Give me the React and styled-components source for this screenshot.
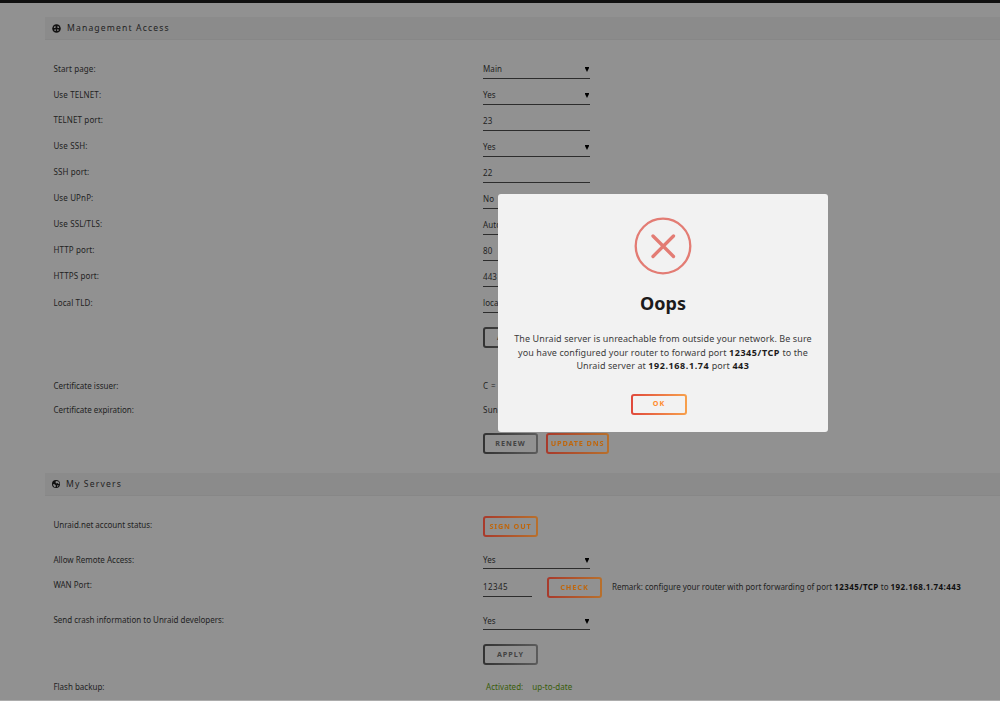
import styled, { createGlobalStyle } from 'styled-components'

const GlobalStyle = createGlobalStyle`
  * {
    box-sizing: border-box;
  }

  body {
    margin: 0;
    background: #f2f2f2;
    color: #3a3a3a;
    font-family: 'Noto Sans', sans-serif;
    font-size: 8px;
    line-height: 12px;
    overflow: hidden;
  }
`

const Page = styled.main`
  height: 701px;
  overflow: hidden;
  border-top: 3px solid #1c1b1b;
  border-bottom: 1px solid #acacac;
`

const Section = styled.section`
  padding: ${({ $gap }) => $gap}px 0 0 45px;
`

const SectionTitle = styled.h2`
  display: flex;
  align-items: center;
  gap: 6px;
  height: 23px;
  margin: 0;
  padding-left: 7px;
  background: #e8e8e8;
  border-bottom: 1px solid #e2e2e2;
  font-size: 8.6px;
  font-weight: normal;
  letter-spacing: 1.15px;
`

const Rows = styled.div`
  padding: ${({ $top }) => $top}px 0 0 8.4px;
`

const Row = styled.div`
  display: grid;
  grid-template-columns: 429.6px 1fr;
  height: ${({ $height = 26 }) => $height}px;
`

const Label = styled.div`
  padding-top: ${({ $top = 6 }) => $top}px;
  letter-spacing: ${({ $spacing = 0 }) => $spacing}px;
`

const Value = styled.div`
  display: flex;
  align-items: flex-start;
  white-space: pre;
`

const Field = styled.div`
  display: flex;
  align-items: center;
  justify-content: space-between;
  width: ${({ $width = 107 }) => $width}px;
  height: ${({ $height = 23 }) => $height}px;
  padding-top: ${({ $top = 3 }) => $top}px;
  border-bottom: 1px solid #4a4a4a;
  letter-spacing: ${({ $spacing = 0.1 }) => $spacing}px;
`

const Arrow = styled.svg`
  width: 4px;
  height: 5px;
  margin: 1px 1px 0 0;
`

const Plain = styled.div`
  padding-top: ${({ $top = 6 }) => $top}px;
  padding-left: ${({ $left = 0 }) => $left}px;
  letter-spacing: ${({ $spacing = 0 }) => $spacing}px;

  b {
    color: #1c1b1b;
    letter-spacing: 0.42px;
  }
`

const Status = styled(Plain)`
  display: flex;
  gap: 9px;
  color: #5f9c10;
`

const Button = styled.button`
  width: ${({ $width = 55 }) => $width}px;
  height: 21px;
  margin: 0 8px 0 0;
  padding: 0 0 2px;
  border: 2px solid transparent;
  border-radius: 3px;
  background:
    linear-gradient(#f2f2f2, #f2f2f2) padding-box,
    linear-gradient(90deg, #e0493c, #f7a04c) border-box;
  color: #ff8c2f;
  font-family: inherit;
  font-size: 7.2px;
  font-weight: bold;
  letter-spacing: ${({ $spacing = 1 }) => $spacing}px;
  line-height: 12px;
`

const DarkButton = styled(Button)`
  background:
    linear-gradient(#f2f2f2, #f2f2f2) padding-box,
    linear-gradient(90deg, #555, #999) border-box;
  color: #707070;
`

const AccentButton = styled(Button)`
  position: relative;
  z-index: 1;
  background:
    linear-gradient(#919191, #919191) padding-box,
    linear-gradient(90deg, #a83a2c, #b8702c) border-box;
  color: #bf660c;
`

const Overlay = styled.div`
  position: fixed;
  inset: 0 0 1px;
  background: rgba(0, 0, 0, 0.4);
`

const Modal = styled.div`
  position: fixed;
  top: 194px;
  left: 498px;
  z-index: 2;
  display: flex;
  flex-direction: column;
  align-items: center;
  width: 330px;
  height: 238px;
  padding-top: 23px;
  border-radius: 3px;
  background: #f2f2f2;
  text-align: center;

  ${Button} {
    width: 56px;
  }
`

const ModalTitle = styled.h2`
  margin: 15px 0 0;
  color: #1c1b1b;
  font-size: 18px;
  letter-spacing: 0;
  line-height: 26px;
`

const ModalText = styled.p`
  margin: 16px 0 21.2px;
  color: #3c3c3c;
  font-size: 9px;
  letter-spacing: 0.09px;
  line-height: 13.6px;

  b {
    color: #1c1b1b;
    letter-spacing: 0.58px;
  }
`

const Line = styled.span`
  display: block;
  white-space: nowrap;
`

const ManageIcon = () => (
  <svg width="9" height="9" viewBox="0 0 18 18">
    <circle cx="9" cy="9" r="8.500" fill="#1c1b1b" />
    <path d="M3.500 8a5.500 5.500 0 0 1 3.500-4.500V8zM14.500 8A5.500 5.500 0 0 0 11 3.500V8z" fill="#e8e8e8" />
    <path d="M5 10.500h2.500V14H5zM10.500 10.500H13V14h-2.500z" fill="#e8e8e8" />
  </svg>
)

const GlobeIcon = () => (
  <svg width="8" height="8" viewBox="0 0 16 16">
    <circle cx="8" cy="8" r="8" fill="#1c1b1b" />
    <path d="M8 2l5 1 2 4-2 1-2-2-3 1-1-3zM2 8l4 1 2 3-2 3-3-3zM11 10l2 0-1 3-2 1z" fill="#e8e8e8" />
  </svg>
)

const Select = ({ children, ...rest }) => (
  <Field {...rest}>
    {children}
    <Arrow viewBox="0 0 4 5">
      <path d="M0 0h4v1L2 5 0 1z" fill="#000" />
    </Arrow>
  </Field>
)

const settings = [
  { label: 'Start page:', value: 'Main', select: true, top: 7 },
  { label: 'Use TELNET:', value: 'Yes', select: true, top: 7 },
  { label: 'TELNET port:', value: '23' },
  { label: 'Use SSH:', value: 'Yes', select: true },
  { label: 'SSH port:', value: '22' },
  { label: 'Use UPnP:', value: 'No', select: true },
  { label: 'Use SSL/TLS:', value: 'Auto', select: true },
  { label: 'HTTP port:', value: '80' },
  { label: 'HTTPS port:', value: '443' },
  { label: 'Local TLD:', value: 'local', top: 7 },
]

const App = () => {
  return (
    <>
      <GlobalStyle />
      <Page>
        <Section $gap={14}>
          <SectionTitle>
            <ManageIcon />
            Management Access
          </SectionTitle>
          <Rows $top={16}>
            {settings.map(({ label, value, select, top }) => (
              <Row key={label}>
                <Label $top={top} $spacing={0.12}>
                  {label}
                </Label>
                <Value>{select ? <Select>{value}</Select> : <Field>{value}</Field>}</Value>
              </Row>
            ))}
            <Row $height={63}>
              <Label />
              <Value>
                <Plain $top={11}>
                  <DarkButton>APPLY</DarkButton>
                </Plain>
              </Value>
            </Row>
            <Row $height={25}>
              <Label $top={1}>Certificate issuer:</Label>
              <Value>
                <Plain $top={1} $spacing={0.4}>
                  C = US
                </Plain>
              </Value>
            </Row>
            <Row $height={29}>
              <Label $top={0}>Certificate expiration:</Label>
              <Value>
                <Plain $top={0} $spacing={0.25}>
                  Sun, 23 May
                </Plain>
              </Value>
            </Row>
            <Row $height={40}>
              <Label />
              <Value>
                <DarkButton>RENEW</DarkButton>
                <AccentButton $width={63} $spacing={0.9}>
                  UPDATE DNS
                </AccentButton>
              </Value>
            </Row>
          </Rows>
        </Section>
        <Section $gap={0}>
          <SectionTitle>
            <GlobeIcon />
            My Servers
          </SectionTitle>
          <Rows $top={20}>
            <Row $height={31}>
              <Label $top={3}>Unraid.net account status:</Label>
              <Value>
                <AccentButton $spacing={0.9}>SIGN OUT</AccentButton>
              </Value>
            </Row>
            <Row $height={29}>
              <Label $top={7}>Allow Remote Access:</Label>
              <Value>
                <Select $height={22} $top={5}>
                  Yes
                </Select>
              </Value>
            </Row>
            <Row $height={32}>
              <Label $top={3}>WAN Port:</Label>
              <Value>
                <Field $width={49} $height={21} $top={2} $spacing={0.4}>
                  12345
                </Field>
                <Plain $top={1} $left={15}>
                  <AccentButton>CHECK</AccentButton>
                </Plain>
                <Plain $top={5} $left={2} $spacing={-0.03}>
                  Remark: configure your router with port forwarding of port <b>12345/TCP</b> to{' '}
                  <b>192.168.1.74:443</b>
                </Plain>
              </Value>
            </Row>
            <Row $height={36}>
              <Label>Send crash information to Unraid developers:</Label>
              <Value>
                <Select $height={22} $top={5}>
                  Yes
                </Select>
              </Value>
            </Row>
            <Row $height={37}>
              <Label />
              <Value>
                <DarkButton>APPLY</DarkButton>
              </Value>
            </Row>
            <Row $height={18}>
              <Label $top={0}>Flash backup:</Label>
              <Value>
                <Status $top={0} $left={3} $spacing={0.04}>
                  <span>Activated:</span>
                  <span>up-to-date</span>
                </Status>
              </Value>
            </Row>
          </Rows>
        </Section>
      </Page>
      <Overlay />
      <Modal>
        <svg width="58" height="58" viewBox="0 0 58 58" fill="none" stroke="#e37c74">
          <circle cx="29" cy="29" r="27.3" strokeWidth="2.3" />
          <path d="M19 19l20.500 20.500M39.500 19L19 39.500" strokeWidth="3.3" strokeLinecap="round" />
        </svg>
        <ModalTitle>Oops</ModalTitle>
        <ModalText>
          <Line>The Unraid server is unreachable from outside your network. Be sure</Line>
          <Line>
            you have configured your router to forward port <b>12345/TCP</b> to the
          </Line>
          <Line>
            Unraid server at <b>192.168.1.74</b> port <b>443</b>
          </Line>
        </ModalText>
        <Button>OK</Button>
      </Modal>
    </>
  )
}

export default App
